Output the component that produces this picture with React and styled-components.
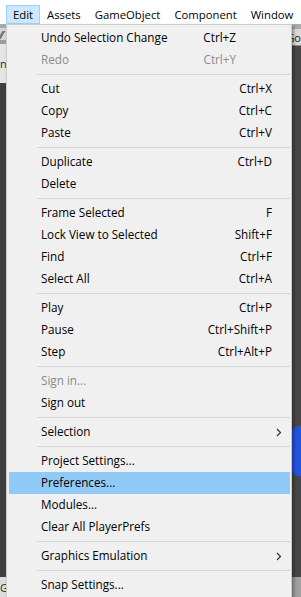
import React from 'react'
import styled, { createGlobalStyle } from 'styled-components'

const GlobalStyle = createGlobalStyle`
  html, body {
    margin: 0;
    padding: 0;
    overflow: hidden;
    background: #3e3e3e;
  }
  body {
    font-family: "Open Sans", "Noto Sans", "Liberation Sans", sans-serif;
    font-size: 11.7px;
  }
`

const Screen = styled.div`
  position: relative;
  width: 301px;
  height: 597px;
  display: flex;
  flex-direction: column;
  overflow: hidden;
`

const MenuBar = styled.div`
  height: 24px;
  background: #ffffff;
  display: flex;
  align-items: flex-end;
  padding-left: 6px;
  box-sizing: border-box;
  flex-shrink: 0;
  font-size: 11.3px;
`

const BarItem = styled.div`
  height: 19px;
  box-sizing: border-box;
  padding: 0 6px;
  display: flex;
  align-items: center;
  color: #000;
  white-space: nowrap;
  border: 1px solid ${p => (p.$open ? '#99d1ff' : 'transparent')};
  background: ${p => (p.$open ? '#cce8ff' : 'transparent')};
`

const Workspace = styled.div`
  flex: 1;
  display: flex;
`

const Pane = styled.div`
  display: flex;
  flex-direction: column;
  width: ${p => p.$width || 'auto'};
  flex: ${p => (p.$width ? '0 0 auto' : '1')};
`

const Band = styled.div`
  height: ${p => p.$h}px;
  flex: ${p => (p.$h ? '0 0 auto' : '1')};
  background: ${p => p.$bg};
  position: relative;
  font-size: 11px;
  color: #222;
  display: flex;
  align-items: center;
  justify-content: ${p => p.$align || 'flex-start'};
  overflow: hidden;
  white-space: nowrap;
  border-bottom: ${p => (p.$line ? `1px solid ${p.$line}` : 'none')};
`

const Gizmo = styled.div`
  position: absolute;
  right: -20px;
  top: 380px;
  width: 30px;
  height: 50px;
  border-radius: 8px 0 0 8px;
  background: #2453e0;
`

const Dropdown = styled.div`
  position: absolute;
  left: 6px;
  top: 24px;
  width: 286px;
  box-sizing: border-box;
  background: #f0f0f0;
  border: 1px solid #cccccc;
  border-bottom: none;
  padding: 2px 1px 20px 2px;
  box-shadow: 2px 2px 3px rgba(0, 0, 0, 0.35);
`

const Row = styled.div`
  height: 22px;
  display: flex;
  align-items: center;
  padding-left: 32px;
  padding-right: ${p => p.$right || 18}px;
  color: ${p => (p.$disabled ? '#8a8a8a' : '#000')};
  background: ${p => (p.$hover ? '#91c9f7' : 'transparent')};
  white-space: nowrap;
  line-height: 1;
`

const Label = styled.span`
  flex: 1;
`

const Shortcut = styled.span`
  text-align: right;
`

const Arrow = styled.svg`
  width: 6px;
  height: 9px;
  margin-right: -10px;
`

const Separator = styled.div`
  height: 1px;
  margin: 3px 0 3px 28px;
  background: #d7d7d7;
`

const groups = [
  [
    { label: 'Undo Selection Change', key: 'Ctrl+Z', right: 54 },
    { label: 'Redo', key: 'Ctrl+Y', right: 54, disabled: true },
  ],
  [
    { label: 'Cut', key: 'Ctrl+X' },
    { label: 'Copy', key: 'Ctrl+C' },
    { label: 'Paste', key: 'Ctrl+V' },
  ],
  [
    { label: 'Duplicate', key: 'Ctrl+D' },
    { label: 'Delete' },
  ],
  [
    { label: 'Frame Selected', key: 'F' },
    { label: 'Lock View to Selected', key: 'Shift+F' },
    { label: 'Find', key: 'Ctrl+F' },
    { label: 'Select All', key: 'Ctrl+A' },
  ],
  [
    { label: 'Play', key: 'Ctrl+P' },
    { label: 'Pause', key: 'Ctrl+Shift+P' },
    { label: 'Step', key: 'Ctrl+Alt+P' },
  ],
  [
    { label: 'Sign in...', disabled: true },
    { label: 'Sign out' },
  ],
  [{ label: 'Selection', sub: true }],
  [
    { label: 'Project Settings...' },
    { label: 'Preferences...', hover: true },
    { label: 'Modules...' },
    { label: 'Clear All PlayerPrefs' },
  ],
  [{ label: 'Graphics Emulation', sub: true }],
  [{ label: 'Snap Settings...' }],
]

function MenuRow({ item }) {
  return (
    <Row $disabled={item.disabled} $hover={item.hover} $right={item.right}>
      <Label>{item.label}</Label>
      {item.key && <Shortcut>{item.key}</Shortcut>}
      {item.sub && (
        <Arrow viewBox="0 0 6 9">
          <path d="M1 1 L4.5 4.5 L1 8" fill="none" stroke="#333" strokeWidth="1.2" />
        </Arrow>
      )}
    </Row>
  )
}

export default function App() {
  return (
    <Screen>
      <GlobalStyle />
      <MenuBar>
        <BarItem $open>Edit</BarItem>
        <BarItem>Assets</BarItem>
        <BarItem>GameObject</BarItem>
        <BarItem>Component</BarItem>
        <BarItem>Window</BarItem>
      </MenuBar>

      <Workspace>
        <Pane $width="150px">
          <Band $h={4} $bg="#a8a8a8" />
          <Band $h={12} $bg="#d6d6d6">⁄⁄</Band>
          <Band $h={4} $bg="#9c9c9c" />
          <Band $h={39} $bg="#e4e4e4">n</Band>
          <Band $bg="#3f3f3f" />
          <Band $h={20} $bg="#dcdcdc">G</Band>
        </Pane>
        <Pane>
          <Band $h={5} $bg="#ababab" />
          <Band $h={16} $bg="#d9d9d9" $line="#8a8a8a" $align="flex-end">Go</Band>
          <Band $bg="#474747">
            <Gizmo />
          </Band>
          <Band $h={20} $bg="#a0a0a0" />
        </Pane>
      </Workspace>

      <Dropdown>
        {groups.map((group, gi) => (
          <React.Fragment key={gi}>
            {gi > 0 && <Separator />}
            {group.map(item => (
              <MenuRow key={item.label} item={item} />
            ))}
          </React.Fragment>
        ))}
      </Dropdown>
    </Screen>
  )
}
